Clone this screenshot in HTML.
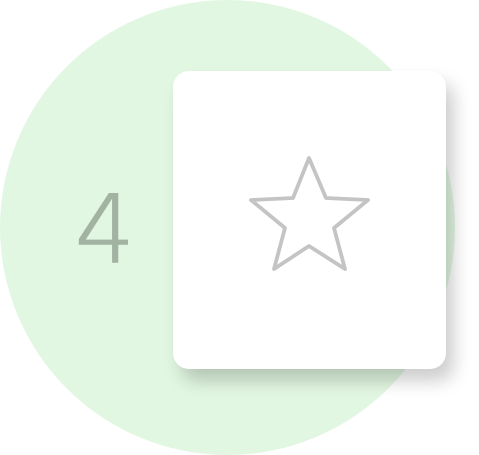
<!DOCTYPE html>
<html><head><style>
html,body{margin:0;padding:0;width:479px;height:455px;overflow:hidden;background:#fff}
.c{position:absolute;left:0;top:0;width:455px;height:455px;border-radius:50%;background:#e2f7e2}
.card{position:absolute;left:173px;top:71px;width:273px;height:298px;border-radius:16px;background:#fff;box-shadow:8px 12px 18px rgba(0,0,0,0.2)}
.n{position:absolute;left:75px;top:184px;font:300 94px "DejaVu Sans","Liberation Sans",sans-serif;color:#a2b3a2;-webkit-text-stroke:1.5px #a2b3a2;line-height:1}
</style></head><body>
<div class="c"></div>
<div class="n">4</div>
<div class="card"></div>
<svg style="position:absolute;left:0;top:0" width="479" height="455">
<path d="M309 158 L326 198 L368 200 L334 228 L345 269 L309 246 L274 269 L285 228 L251 200 L293 198 Z" fill="none" stroke="#c4c4c4" stroke-width="3.8" stroke-linejoin="round"/>
</svg>
</body></html>
